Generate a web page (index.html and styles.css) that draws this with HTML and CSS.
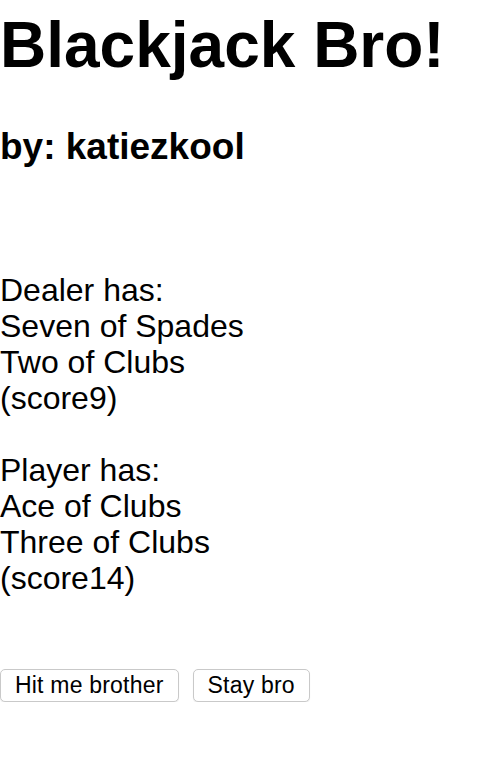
FILE: index.html
```html
<!DOCTYPE html>
<html>
<head>
<meta charset="utf-8">
<title>Blackjack Bro!</title>
<link rel="stylesheet" href="styles.css">
</head>
<body>
<h1 class="title">Blackjack Bro!</h1>
<h2 class="byline">by: katiezkool</h2>
<div class="table">
  <div class="hand">
    <p>Dealer has:</p>
    <p>Seven of Spades</p>
    <p>Two of Clubs</p>
    <p>(score9)</p>
  </div>
  <div class="hand">
    <p>Player has:</p>
    <p>Ace of Clubs</p>
    <p>Three of Clubs</p>
    <p>(score14)</p>
  </div>
</div>
<div class="actions">
  <button class="btn">Hit me brother</button>
  <button class="btn">Stay bro</button>
</div>
</body>
</html>
```
FILE: styles.css
```css
html, body {
  margin: 0;
  padding: 0;
  background: #ffffff;
}
body {
  font-family: "Liberation Sans", Helvetica, Arial, sans-serif;
  color: #000000;
}
.title {
  font-size: 64px;
  line-height: 74px;
  font-weight: bold;
  margin: 8px 0 0 0;
}
.byline {
  font-size: 37px;
  line-height: 42px;
  font-weight: bold;
  margin: 44px 0 0 0;
}
.table {
  margin-top: 104px;
  display: flex;
  flex-direction: column;
  gap: 36px;
}
.hand p {
  margin: 0;
  font-size: 32px;
  line-height: 36px;
}
.actions {
  margin-top: 73px;
  display: flex;
  gap: 14px;
}
.btn {
  font-family: "Liberation Sans", Helvetica, Arial, sans-serif;
  font-size: 23px;
  height: 33px;
  padding: 0 14px;
  background: #ffffff;
  color: #000000;
  border: 1px solid #c9c9c9;
  border-radius: 5px;
  box-shadow: 0 1px 1px rgba(0, 0, 0, 0.08);
  letter-spacing: 0.2px;
}
```
